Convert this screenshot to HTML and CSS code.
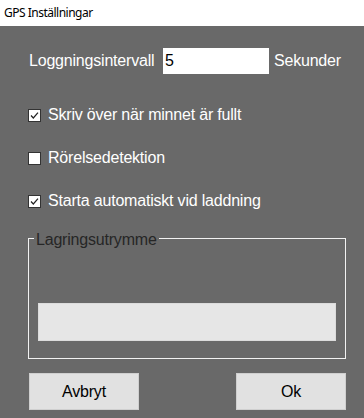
FILE: index.html
```html
<!DOCTYPE html>
<html lang="sv">
<head>
<meta charset="utf-8">
<title>GPS Inställningar</title>
<link rel="stylesheet" href="styles.css">
</head>
<body>
<div class="window">
  <div class="titlebar">GPS Inställningar</div>
  <div class="content">
    <div class="interval-row">
      <span class="interval-label">Loggningsintervall</span>
      <span class="text-input">5</span>
      <span class="unit">Sekunder</span>
    </div>
    <div class="check-row first">
      <span class="checkbox"><svg width="13" height="13" viewBox="0 0 13 13"><rect x="0.5" y="0.5" width="12" height="12" fill="#fff" stroke="#333"/><polyline points="3,6.5 5.3,9 10,3.6" fill="none" stroke="#222" stroke-width="1.2"/></svg></span>
      <span class="check-label">Skriv över när minnet är fullt</span>
    </div>
    <div class="check-row">
      <span class="checkbox"><svg width="13" height="13" viewBox="0 0 13 13"><rect x="0.5" y="0.5" width="12" height="12" fill="#fff" stroke="#333"/></svg></span>
      <span class="check-label">Rörelsedetektion</span>
    </div>
    <div class="check-row">
      <span class="checkbox"><svg width="13" height="13" viewBox="0 0 13 13"><rect x="0.5" y="0.5" width="12" height="12" fill="#fff" stroke="#333"/><polyline points="3,6.5 5.3,9 10,3.6" fill="none" stroke="#222" stroke-width="1.2"/></svg></span>
      <span class="check-label">Starta automatiskt vid laddning</span>
    </div>
    <fieldset class="group">
      <legend class="group-legend">Lagringsutrymme</legend>
      <div class="progress"></div>
    </fieldset>
    <div class="buttons">
      <button class="btn">Avbryt</button>
      <button class="btn">Ok</button>
    </div>
  </div>
</div>
</body>
</html>
```
FILE: styles.css
```css
html, body {
  margin: 0;
  padding: 0;
  background: #696969;
}
.window {
  width: 364px;
  height: 418px;
  background: #696969;
  font-family: "Liberation Sans", Arial, sans-serif;
  font-size: 16px;
  letter-spacing: -0.2px;
  color: #ffffff;
}
.titlebar {
  height: 26px;
  background: #ffffff;
  color: #000000;
  font-family: "Noto Sans", "Open Sans", sans-serif;
  font-size: 12px;
  letter-spacing: -0.5px;
  line-height: 26px;
  padding-left: 4px;
}
.content {
  padding-left: 28px;
}
.interval-row {
  display: flex;
  align-items: center;
  height: 26px;
  margin-top: 22px;
}
.interval-label {
  width: 135px;
  padding-left: 1px;
  box-sizing: border-box;
}
.text-input {
  width: 106px;
  height: 26px;
  background: #ffffff;
  color: #000000;
  line-height: 26px;
  padding-left: 2px;
  box-sizing: border-box;
}
.unit {
  margin-left: 5px;
}
.check-row {
  display: flex;
  align-items: center;
  height: 20px;
  gap: 7px;
  margin-top: 23px;
}
.check-row.first {
  margin-top: 31px;
}
.checkbox {
  display: flex;
  width: 13px;
  height: 13px;
}
.group {
  margin: 16px 0 0 0;
  width: 318px;
  box-sizing: border-box;
  border: 1px solid #f2f2f2;
  padding: 0 9px 17px 5px;
}
.group-legend {
  padding: 4px 2px 0 2px;
  line-height: 18px;
  color: #262626;
}
.progress {
  margin: 54px 0 0 4px;
  width: 298px;
  height: 38px;
  box-sizing: border-box;
  background: #e6e6e6;
  border: 1px solid #dcdcdc;
}
.buttons {
  display: flex;
  justify-content: space-between;
  width: 317px;
  margin: 14px 0 0 1px;
}
.btn {
  width: 110px;
  height: 37px;
  background: #e1e1e1;
  border: 1px solid #cfcfcf;
  font-family: "Liberation Sans", Arial, sans-serif;
  font-size: 16px;
  letter-spacing: -0.2px;
  color: #000000;
  padding: 0;
}
```
